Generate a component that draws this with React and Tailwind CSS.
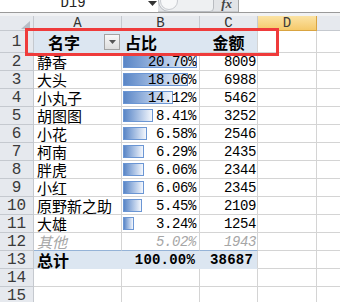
const rows = [
  { name: '静香', pct: '20.70%', amt: '8009', bar: 74 },
  { name: '大头', pct: '18.06%', amt: '6988', bar: 65 },
  { name: '小丸子', pct: '14.12%', amt: '5462', bar: 50 },
  { name: '胡图图', pct: '8.41%', amt: '3252', bar: 30 },
  { name: '小花', pct: '6.58%', amt: '2546', bar: 24 },
  { name: '柯南', pct: '6.29%', amt: '2435', bar: 21 },
  { name: '胖虎', pct: '6.06%', amt: '2344', bar: 21 },
  { name: '小红', pct: '6.06%', amt: '2345', bar: 21 },
  { name: '原野新之助', pct: '5.45%', amt: '2109', bar: 19 },
  { name: '大雄', pct: '3.24%', amt: '1254', bar: 11 },
];

const cjk = "font-['Noto_Sans_CJK_SC',sans-serif]";
const mono = "font-['Liberation_Mono',monospace]";

function RowHead({ n, h = 'h-[18px]' }) {
  return (
    <div
      className={`${h} w-[34px] shrink-0 flex items-center justify-center border-r border-b border-[#c5c9cf] bg-[#e6e9ee] text-[16px] leading-none text-[#3a3a3a] ${mono}`}
    >
      {n}
    </div>
  );
}

function Tail() {
  return (
    <>
      <div className="h-full w-[59px] shrink-0 border-r border-b border-[#d4d4d4]" />
      <div className="h-full flex-1 border-b border-[#d4d4d4]" />
    </>
  );
}

function DataRow({ n, r }) {
  return (
    <div className="flex h-[18px]">
      <RowHead n={n} />
      <div className={`w-[88px] shrink-0 flex items-center pl-[3px] border-r border-b border-[#d4d4d4] text-[15px] leading-none text-black ${cjk}`}>
        {r.name}
      </div>
      <div className="relative w-[78px] shrink-0 flex items-center justify-end pr-[3px] border-r border-b border-[#d4d4d4]">
        <div
          className="absolute left-[1px] top-[2px] h-[13px] border border-[#6b96d4] bg-linear-to-r from-[#5a86c6] to-[#f4f7fc]"
          style={{ width: r.bar }}
        />
        <span className={`relative text-[14px] leading-none tracking-[-0.4px] text-black ${mono}`}>{r.pct}</span>
      </div>
      <div className={`w-[58px] shrink-0 flex items-center justify-end pr-[1px] border-r border-b border-[#d4d4d4] text-[14px] leading-none tracking-[-0.4px] text-black ${mono}`}>
        {r.amt}
      </div>
      <Tail />
    </div>
  );
}

export default function App() {
  return (
    <div className="relative w-[340px] h-[302px] overflow-hidden bg-white select-none">
      {/* formula bar */}
      <div className="flex h-[13px] border-b border-[#9a9a9a] bg-white">
        <div className="w-[146px] shrink-0 overflow-hidden flex justify-center">
          <span className={`block -mt-[4px] text-[14px] leading-[14px] text-[#222] ${mono}`}>D19</span>
        </div>
        <div className="w-[12px] shrink-0 flex justify-center">
          <svg width="9" height="5" viewBox="0 0 9 5" className="mt-[1px]">
            <polygon points="0,0 9,0 4.5,5" fill="#333" />
          </svg>
        </div>
        <div className="w-[80px] shrink-0 flex bg-[#e2e4e7] border-b border-[#c9cbce]">
          <div className="h-[22px] w-[56px] -mt-[10px] rounded-bl-[11px] rounded-br-[4px] border border-[#b9bcc1] bg-[#eef0f2] flex">
            <div className="h-[18px] w-[18px] mt-[1px] ml-[1px] rounded-full border border-[#c8cbd0] bg-[#f7f8f9]" />
          </div>
          <span className="ml-auto mr-[6px] -mt-[3px] text-[13px] leading-[14px] italic font-bold text-[#444] font-['Liberation_Serif',serif]">fx</span>
        </div>
        <div className="flex-1 border-l border-[#a8a8a8] bg-white" />
      </div>
      <div className="h-[3px] bg-[#f1f2f4]" />

      {/* column header */}
      <div className={`flex h-[15px] text-[14px] leading-none text-[#333] ${mono}`}>
        <div className="relative w-[34px] shrink-0 border-r border-b border-[#c5c9cf] bg-[#e6e9ee]">
          <svg width="9" height="8" viewBox="0 0 9 8" className="absolute left-[21px] top-[5px]">
            <polygon points="9,0 9,8 0,8" fill="#b7bdc6" />
          </svg>
        </div>
        <div className="w-[88px] shrink-0 flex items-center justify-center border-r border-b border-[#c5c9cf] bg-[#e6e9ee]">A</div>
        <div className="w-[78px] shrink-0 flex items-center justify-center border-r border-b border-[#c5c9cf] bg-[#e6e9ee]">B</div>
        <div className="w-[58px] shrink-0 flex items-center justify-center border-r border-b border-[#c5c9cf] bg-[#e6e9ee]">C</div>
        <div className="w-[59px] shrink-0 flex items-center justify-center border-r border-b border-[#d9a441] bg-linear-to-b from-[#fbe3a4] to-[#f5c96a] text-[#3a3a3a]">D</div>
        <div className="flex-1 border-b border-[#c5c9cf] bg-[#e6e9ee]" />
      </div>

      {/* row 1: header */}
      <div className="flex h-[22px]">
        <RowHead n="1" h="h-[22px]" />
        <div className={`w-[88px] shrink-0 flex items-center border-r border-b border-[#dce6f1] bg-[#dce6f1] text-[16px] font-bold leading-none text-black ${cjk}`}>
          <span className="ml-[14px]">名字</span>
          <div className="ml-auto mr-[1px] h-[16px] w-[16px] flex items-center justify-center border border-[#a3a3a3] bg-linear-to-b from-[#f7f7f7] to-[#dedede]">
            <svg width="7" height="4" viewBox="0 0 7 4">
              <polygon points="0,0 7,0 3.5,4" fill="#555" />
            </svg>
          </div>
        </div>
        <div className={`w-[78px] shrink-0 flex items-center pl-[3px] border-r border-b border-[#dce6f1] bg-[#dce6f1] text-[16px] font-bold leading-none text-black ${cjk}`}>
          占比
        </div>
        <div className={`w-[58px] shrink-0 flex items-center justify-center border-r border-b border-[#d4d4d4] bg-[#dce6f1] text-[16px] font-bold leading-none text-black ${cjk}`}>
          金额
        </div>
        <Tail />
      </div>

      {rows.map((r, i) => (
        <DataRow key={r.name + i} n={i + 2} r={r} />
      ))}

      {/* row 12: other */}
      <div className="flex h-[18px]">
        <RowHead n="12" />
        <div className={`w-[88px] shrink-0 flex items-center pl-[3px] border-r border-b border-r-[#d4d4d4] border-b-[#95b3d7] text-[15px] leading-none italic text-[#a6a6a6] ${cjk}`}>
          其他
        </div>
        <div className={`w-[78px] shrink-0 flex items-center justify-end pr-[3px] border-r border-b border-r-[#d4d4d4] border-b-[#95b3d7] text-[14px] leading-none tracking-[-0.4px] italic text-[#a6a6a6] ${mono}`}>
          5.02%
        </div>
        <div className={`w-[58px] shrink-0 flex items-center justify-end pr-[1px] border-r border-b border-r-[#d4d4d4] border-b-[#95b3d7] text-[14px] leading-none tracking-[-0.4px] italic text-[#a6a6a6] ${mono}`}>
          1943
        </div>
        <Tail />
      </div>

      {/* row 13: total */}
      <div className="flex h-[18px]">
        <RowHead n="13" />
        <div className={`w-[88px] shrink-0 flex items-center pl-[3px] border-r border-b border-[#dce6f1] bg-[#dce6f1] text-[16px] font-bold leading-none text-black ${cjk}`}>
          总计
        </div>
        <div className={`w-[78px] shrink-0 flex items-center justify-end pr-[4px] border-r border-b border-[#dce6f1] bg-[#dce6f1] text-[14px] font-bold leading-none tracking-[0.2px] text-black ${mono}`}>
          100.00%
        </div>
        <div className={`w-[58px] shrink-0 flex items-center justify-end pr-[4px] border-r border-b border-r-[#d4d4d4] border-b-[#dce6f1] bg-[#dce6f1] text-[14px] font-bold leading-none tracking-[0.2px] text-black ${mono}`}>
          38687
        </div>
        <Tail />
      </div>

      {[14, 15].map(n => (
        <div key={n} className="flex h-[18px]">
          <RowHead n={n} />
          <div className="w-[88px] shrink-0 border-r border-b border-[#d4d4d4]" />
          <div className="w-[78px] shrink-0 border-r border-b border-[#d4d4d4]" />
          <div className="w-[58px] shrink-0 border-r border-b border-[#d4d4d4]" />
          <Tail />
        </div>
      ))}

      {/* red highlight box */}
      <div className="absolute left-[25px] top-[28px] h-[28px] w-[254px] border-[3px] border-[#ef3b3b]" />
    </div>
  );
}
